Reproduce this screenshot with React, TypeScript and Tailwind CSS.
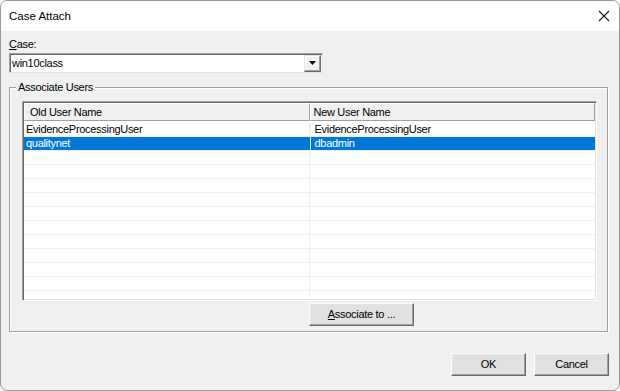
import React from "react";

const font = { fontFamily: "'Liberation Sans', Arial, sans-serif", letterSpacing: "-0.3px" };

function Btn({ children, className = "" }: { children: React.ReactNode; className?: string }) {
  return (
    <div
      className={`flex items-center justify-center bg-[#e1e1e1] border border-t-[#fcfcfc] border-l-[#fcfcfc] border-r-[#696969] border-b-[#696969] shadow-[inset_-1px_-1px_0_#a0a0a0,inset_1px_1px_0_#e3e3e3] text-[11px] text-black ${className}`}
    >
      {children}
    </div>
  );
}

export default function App() {
  const rows: [string, string, boolean][] = [
    ["EvidenceProcessingUser", "EvidenceProcessingUser", false],
    ["qualitynet", "dbadmin", true],
  ];
  const empty = Array.from({ length: 11 });
  return (
    <div className="w-[620px] h-[391px] bg-white overflow-hidden" style={font}>
      <div className="w-[620px] h-[391px] flex flex-col bg-[#f0f0f0] border border-[#9a9a9a] rounded-[7px] overflow-hidden">
        {/* title bar */}
        <div className="h-[30px] bg-white flex items-center justify-between pl-[8px] pr-[9px] shrink-0">
          <span className="text-[11.5px] text-black pt-[1px]" style={{ letterSpacing: "0px" }}>Case Attach</span>
          <svg width="12" height="12" viewBox="0 0 12 12">
            <path d="M1 1 L11 11 M11 1 L1 11" stroke="#1a1a1a" strokeWidth="1.1" />
          </svg>
        </div>
        {/* body */}
        <div className="flex flex-col px-[8px] pt-[6px] text-[11px] text-black">
          <div className="h-[14px] leading-[14px]">
            <span className="underline">C</span>ase:
          </div>
          <div className="mt-[2px] w-[314px] h-[20px] bg-white border border-t-[#a0a0a0] border-l-[#a0a0a0] border-r-[#e3e3e3] border-b-[#e3e3e3] shadow-[inset_1px_1px_0_#696969] flex items-center justify-between">
            <span className="pl-[2px] text-[11px]">win10class</span>
            <div className="w-[17px] h-[17px] mr-[1px] bg-[#f0f0f0] border border-t-[#e3e3e3] border-l-[#e3e3e3] border-r-[#696969] border-b-[#696969] shadow-[inset_-1px_-1px_0_#a0a0a0,inset_1px_1px_0_#ffffff] flex items-center justify-center">
              <svg width="7" height="4" viewBox="0 0 7 4">
                <path d="M0 0 H7 L3.5 4 Z" fill="#000" />
              </svg>
            </div>
          </div>
          {/* group box */}
          <div className="relative mt-[14px] w-[599px] h-[245px] border border-[#a0a0a0] shadow-[inset_1px_1px_0_#ffffff,1px_1px_0_#ffffff] pl-[12px] pt-[13px]">
            <span className="absolute left-[6px] top-[-8px] bg-[#f0f0f0] px-[2px] leading-[14px]">Associate Users</span>
            {/* list view */}
            <div className="w-[575px] h-[200px] bg-white border border-t-[#a0a0a0] border-l-[#a0a0a0] border-r-[#ffffff] border-b-[#ffffff] shadow-[inset_1px_1px_0_#696969,inset_-1px_-1px_0_#e3e3e3] p-[1px] flex flex-col overflow-hidden">
              <div className="flex h-[18px] shrink-0 bg-[#f0f0f0]">
                <div className="w-[286px] border-r border-b border-r-[#a0a0a0] border-b-[#a0a0a0] border-t border-l border-t-white border-l-white pl-[5px] flex items-center">Old User Name</div>
                <div className="w-[286px] border-r border-b border-r-[#a0a0a0] border-b-[#a0a0a0] border-t border-l border-t-white border-l-white pl-[3px] flex items-center">New User Name</div>
                <div className="flex-1 bg-white"></div>
              </div>
              <div className="h-[2px] shrink-0"></div>
              {rows.map(([a, b, sel], i) => (
                <div key={i} className={`flex h-[14px] shrink-0 border-b border-[#f0f0f0] ${sel ? "bg-[#0078d7] text-white" : ""}`}>
                  <div className={`w-[286px] pl-[2px] leading-[13px] ${sel ? "" : "border-r border-[#f0f0f0]"}`}>{a}</div>
                  <div className="w-[286px] pl-[4px] leading-[13px] border-l border-[#f0f0f0]">{b}</div>
                </div>
              ))}
              {empty.map((_, i) => (
                <div key={i} className="flex h-[14px] shrink-0 border-b border-[#f0f0f0]">
                  <div className="w-[286px] border-r border-[#f0f0f0]"></div>
                  <div className="w-[286px]"></div>
                </div>
              ))}
            </div>
            <div className="flex">
              <div className="w-[287px]"></div>
              <Btn className="mt-[2px] w-[105px] h-[23px]">
                <span>
                  <span className="underline">A</span>ssociate to ...
                </span>
              </Btn>
            </div>
          </div>
          {/* bottom buttons */}
          <div className="flex justify-end gap-[8px] mt-[21px] pr-[2px]">
            <Btn className="w-[75px] h-[23px]">OK</Btn>
            <Btn className="w-[75px] h-[23px]">Cancel</Btn>
          </div>
        </div>
      </div>
    </div>
  );
}
